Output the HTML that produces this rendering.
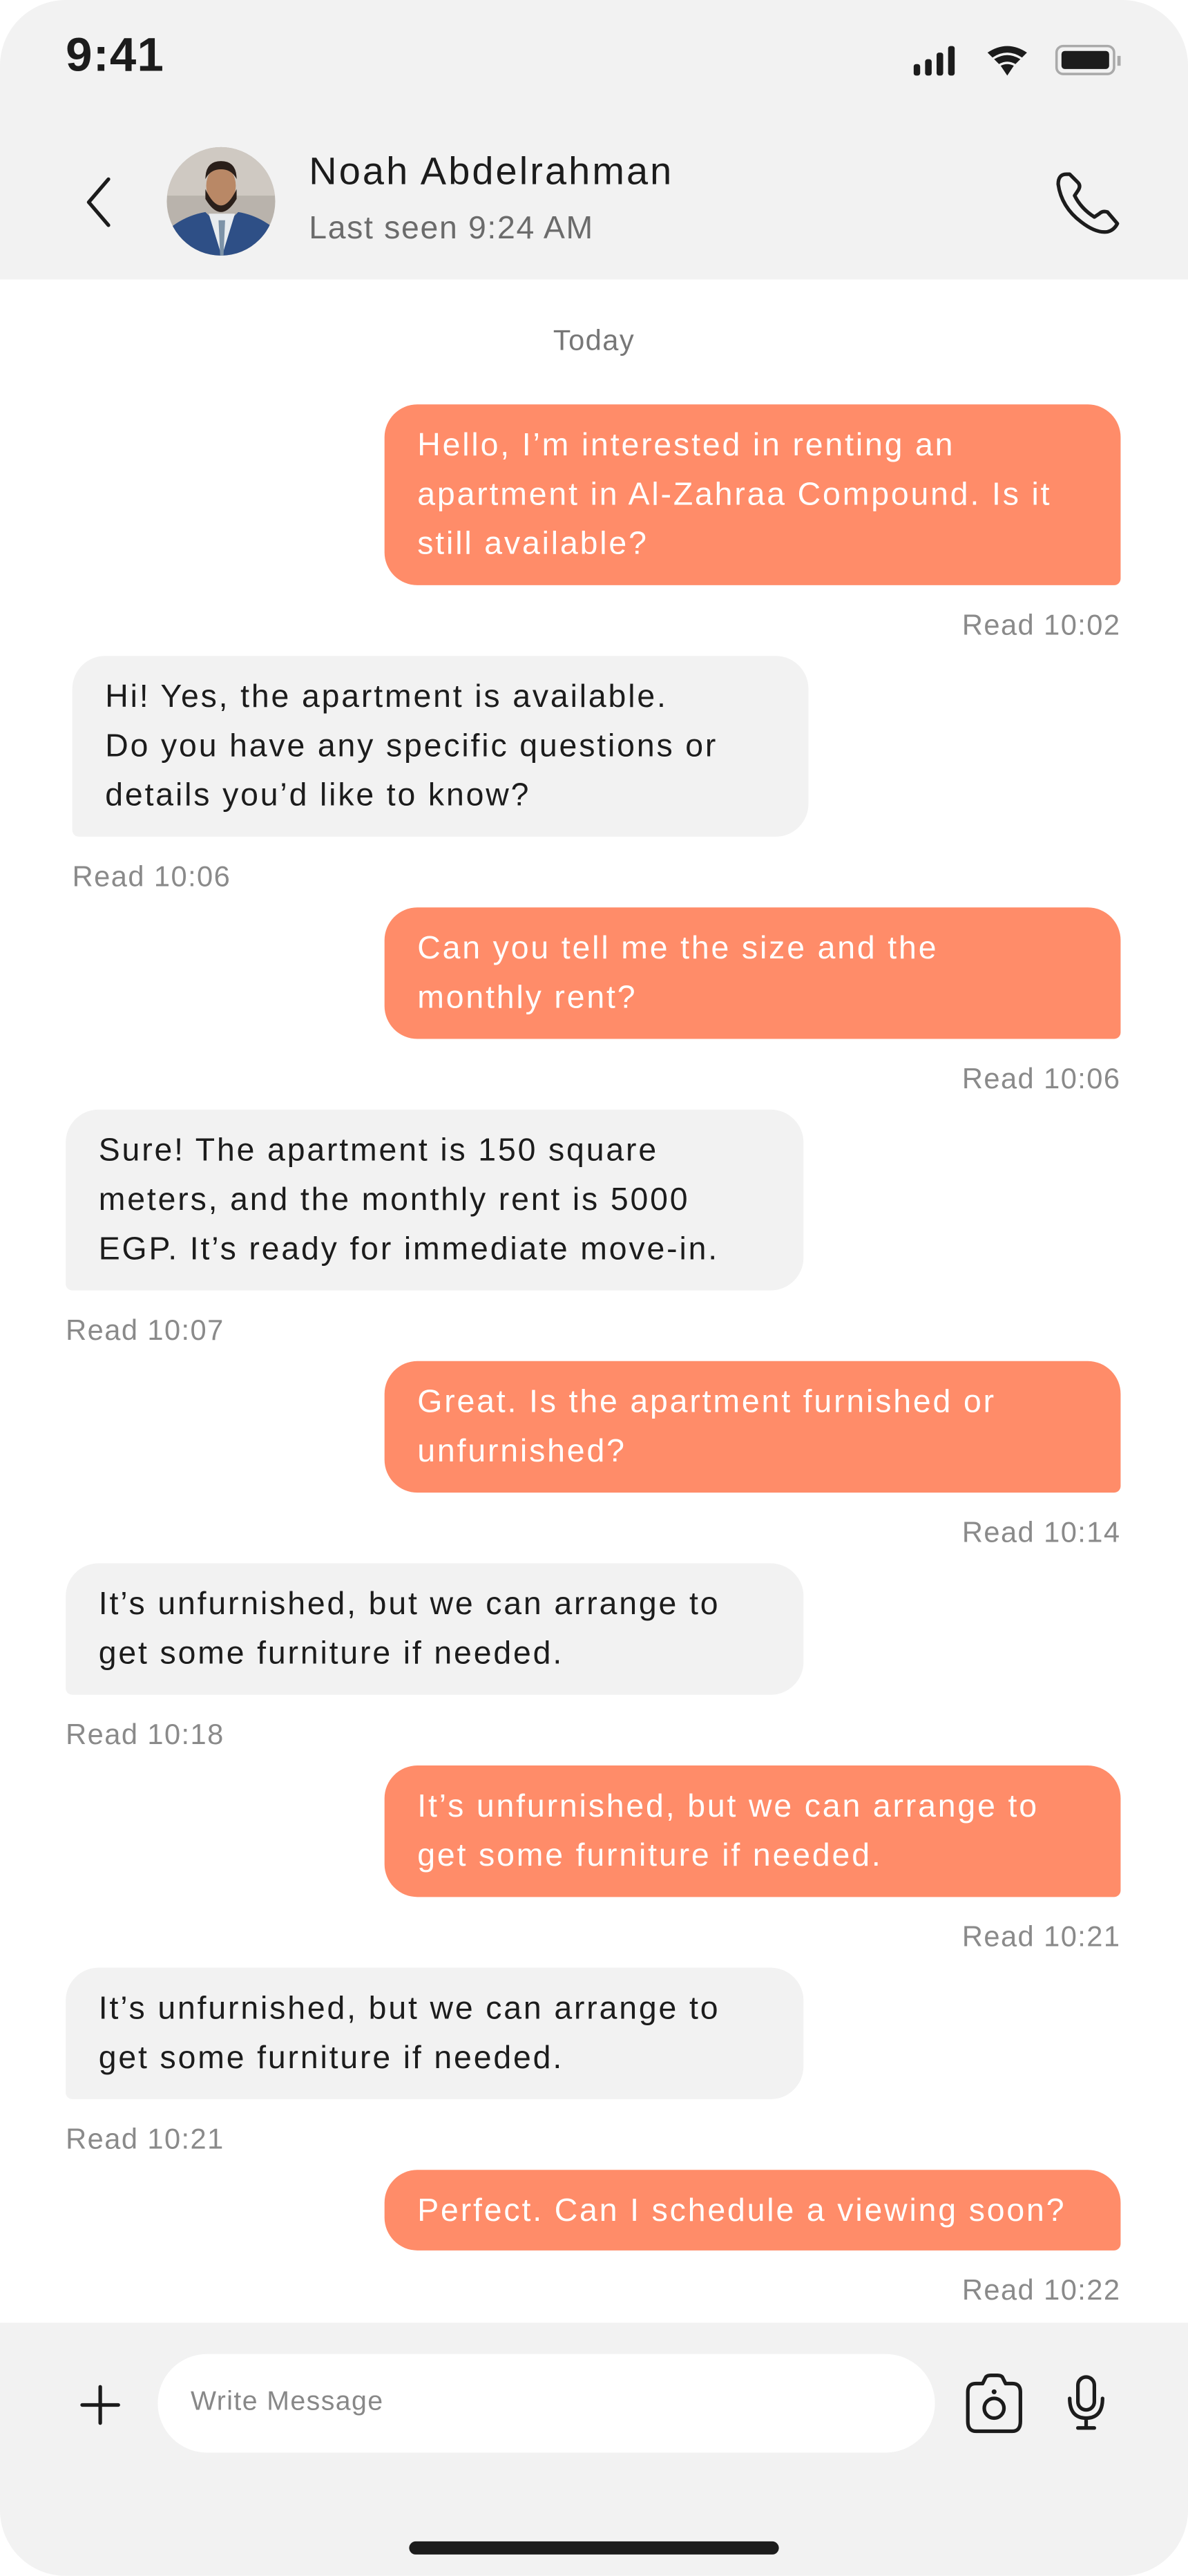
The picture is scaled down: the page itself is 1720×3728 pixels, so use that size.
<!DOCTYPE html>
<html><head><meta charset="utf-8">
<style>
html,body{margin:0;padding:0;background:#fff;}
body{width:1720px;height:3728px;overflow:hidden;position:relative;}
#s{position:absolute;left:0;top:0;width:723px;height:1567px;transform:scale(2.37898);transform-origin:0 0;font-family:"Liberation Sans",sans-serif;border-radius:40px;overflow:hidden;background:#fff;}
.a{position:absolute;}
.hdr{left:0;top:0;width:723px;height:170px;background:#f2f2f2;}
.bot{left:0;top:1413px;width:723px;height:154px;background:#f2f2f2;}
.b{position:absolute;font-size:19.5px;line-height:30px;letter-spacing:1.2px;white-space:nowrap;padding:10px 20px;box-sizing:border-box;border-radius:20px;}
.o{background:#ff8c69;color:#fff;left:234px;width:448px;border-bottom-right-radius:4px;}
.i{background:#f2f2f2;color:#1c1c1c;border-bottom-left-radius:4px;}
.r{position:absolute;font-size:17.5px;color:#8a8a8a;letter-spacing:0.6px;line-height:20px;}
.rr{right:41px;}
</style></head><body>
<div id="s">
<div class="a hdr"></div>
<div class="a" style="left:40px;top:18px;font-size:29px;font-weight:bold;color:#1c1c1c;letter-spacing:0.5px">9:41</div>
<svg class="a" style="left:556px;top:26px" width="130" height="22" viewBox="0 0 130 22">
<rect x="0" y="13" width="4" height="7" rx="1.5" fill="#1c1c1c"/><rect x="7" y="10" width="4" height="10" rx="1.5" fill="#1c1c1c"/><rect x="14" y="6" width="4" height="14" rx="1.5" fill="#1c1c1c"/><rect x="21" y="2" width="4" height="18" rx="1.5" fill="#1c1c1c"/>
<path d="M45 6 Q57 -2 69 6 L66 9 Q57 3 48 9 Z M49 10 Q57 5 65 10 L62 13 Q57 10 52 13 Z M53 14 Q57 12 61 14 L57 20 Z" fill="#1c1c1c"/>
<rect x="87" y="2" width="35" height="17" rx="4" fill="none" stroke="#aaa" stroke-width="1.5"/><rect x="90" y="5" width="29" height="11" rx="2" fill="#1c1c1c"/><rect x="124" y="8" width="2" height="6" fill="#aaa"/>
</svg>
<svg class="a" style="left:48px;top:106px" width="24" height="34" viewBox="0 0 24 34"><path d="M18 3 L6 17 L18 31" fill="none" stroke="#1c1c1c" stroke-width="2.2" stroke-linecap="round" stroke-linejoin="round"/></svg>
<svg class="a" style="left:101px;top:89px" width="67" height="67" viewBox="0 0 67 67">
<defs><clipPath id="c"><circle cx="33.5" cy="33.5" r="33"/></clipPath></defs>
<g clip-path="url(#c)"><rect width="67" height="67" fill="#b9b3ac"/><rect x="0" y="0" width="67" height="30" fill="#cfc9c2"/>
<path d="M0 67 L2 50 Q12 42 24 40 L34 50 L44 40 Q56 42 66 50 L67 67 Z" fill="#2e4f86"/>
<path d="M26 41 L34 67 L42 41 Z" fill="#e8ecef"/><path d="M32 45 L36 45 L35 67 L33 67 Z" fill="#7d93a8"/>
<ellipse cx="33.5" cy="24" rx="9" ry="12" fill="#b98866"/><path d="M24 26 Q33.5 46 43 26 L43 32 Q33.5 48 24 32 Z" fill="#2a1f1a"/><path d="M24 20 Q24 9 33.5 9 Q43 9 43 20 Q40 14 33.5 14 Q27 14 24 20 Z" fill="#2a1f1a"/></g></svg>
<div class="a" style="left:188px;top:91px;font-size:23.5px;color:#1c1c1c;letter-spacing:1.3px">Noah Abdelrahman</div>
<div class="a" style="left:188px;top:128px;font-size:19.5px;color:#6b6b6b;letter-spacing:0.7px">Last seen 9:24 AM</div>
<svg class="a" style="left:640px;top:102px" width="44" height="42" viewBox="0 0 44 42"><path d="M9 4 Q4 4 4 10 Q6 24 18 33 Q27 40 34 39 Q38 38 40 34 L34 27 Q31 26 29 28 L26 30 Q18 25 14 17 L16 14 Q18 11 16 9 L11 4 Z" fill="none" stroke="#1c1c1c" stroke-width="2.2" stroke-linejoin="round"/></svg>

<div class="a" style="left:0;width:723px;top:197px;text-align:center;font-size:17.5px;color:#777;letter-spacing:0.6px">Today</div>

<div class="b o" style="top:246px;height:110px">Hello, I’m interested in renting an<br>apartment in Al-Zahraa Compound. Is it<br>still available?</div>
<div class="r rr" style="top:370px">Read 10:02</div>
<div class="b i" style="left:44px;width:448px;top:399px;height:110px">Hi! Yes, the apartment is available.<br>Do you have any specific questions or<br>details you’d like to know?</div>
<div class="r" style="left:44px;top:523px">Read 10:06</div>

<div class="b o" style="top:552px;height:80px">Can you tell me the size and the<br>monthly rent?</div>
<div class="r rr" style="top:646px">Read 10:06</div>
<div class="b i" style="left:40px;width:449px;top:675px;height:110px">Sure! The apartment is 150 square<br>meters, and the monthly rent is 5000<br>EGP. It’s ready for immediate move-in.</div>
<div class="r" style="left:40px;top:799px">Read 10:07</div>

<div class="b o" style="top:828px;height:80px">Great. Is the apartment furnished or<br>unfurnished?</div>
<div class="r rr" style="top:922px">Read 10:14</div>
<div class="b i" style="left:40px;width:449px;top:951px;height:80px">It’s unfurnished, but we can arrange to<br>get some furniture if needed.</div>
<div class="r" style="left:40px;top:1045px">Read 10:18</div>

<div class="b o" style="top:1074px;height:80px">It’s unfurnished, but we can arrange to<br>get some furniture if needed.</div>
<div class="r rr" style="top:1168px">Read 10:21</div>
<div class="b i" style="left:40px;width:449px;top:1197px;height:80px">It’s unfurnished, but we can arrange to<br>get some furniture if needed.</div>
<div class="r" style="left:40px;top:1291px">Read 10:21</div>

<div class="b o" style="top:1320px;height:49px">Perfect. Can I schedule a viewing soon?</div>
<div class="r rr" style="top:1383px">Read 10:22</div>

<div class="a bot"></div>
<svg class="a" style="left:48px;top:1450px" width="26" height="26" viewBox="0 0 26 26"><path d="M13 2 V24 M2 13 H24" stroke="#1c1c1c" stroke-width="2.2" stroke-linecap="round"/></svg>
<div class="a" style="left:96px;top:1432px;width:473px;height:60px;background:#fff;border-radius:30px"></div>
<div class="a" style="left:116px;top:1452px;font-size:16.5px;color:#888;letter-spacing:0.6px">Write Message</div>
<svg class="a" style="left:586px;top:1442px" width="38" height="40" viewBox="0 0 38 40"><path d="M12 8 L14 4 Q15 3 17 3 H21 Q23 3 24 4 L26 8 H30 Q35 8 35 13 V31 Q35 37 30 37 H8 Q3 37 3 31 V13 Q3 8 8 8 Z" fill="none" stroke="#1c1c1c" stroke-width="2.2" stroke-linejoin="round"/><circle cx="19" cy="23" r="6" fill="none" stroke="#1c1c1c" stroke-width="2.2"/><circle cx="19" cy="13" r="1.5" fill="#1c1c1c"/></svg>
<svg class="a" style="left:648px;top:1444px" width="26" height="36" viewBox="0 0 26 36"><rect x="8" y="2" width="10" height="20" rx="5" fill="none" stroke="#1c1c1c" stroke-width="2.2"/><path d="M3 15 Q3 27 13 27 Q23 27 23 15 M13 27 V33 M8 33 H18" fill="none" stroke="#1c1c1c" stroke-width="2.2" stroke-linecap="round"/></svg>
<div class="a" style="left:249px;top:1546px;width:225px;height:8px;border-radius:4px;background:#1c1c1c"></div>
</div>
</body></html>
